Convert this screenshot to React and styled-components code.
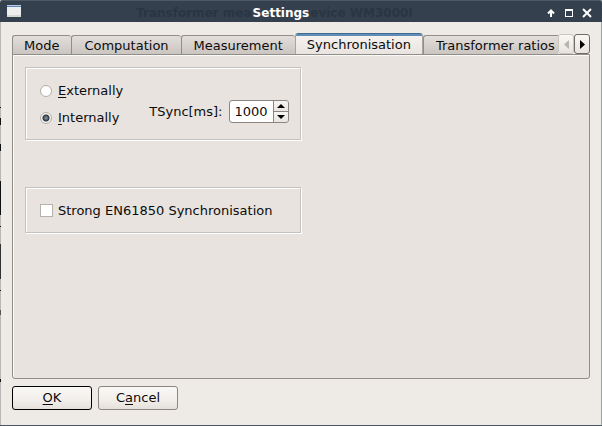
import React, { useState } from "react";
import styled, { createGlobalStyle } from "styled-components";

const GlobalStyle = createGlobalStyle`
  * { box-sizing: border-box; }
  body { margin: 0; background: #8f9a9c; }
  body, button, input { font: 13px/17px "DejaVu Sans", sans-serif; color: #0c0c0c; }
`;

const Window = styled.div`
  min-height: 100vh;
  display: flex;
  flex-direction: column;
  padding: 0 1px;
  border-bottom: 1px solid #4a5662;
  background: linear-gradient(
    #b9b7b5 0 107px, #111 107px 108px, #b9b7b5 108px 118px, #111 118px 125px,
    #b9b7b5 125px 144px, #111 144px 151px, #b9b7b5 151px 181px, #111 181px 215px,
    #b9b7b5 215px 226px, #111 226px 227px, #b9b7b5 227px 244px, #333 244px 279px,
    #b9b7b5 279px 290px, #111 290px 291px, #b9b7b5 291px 310px, #555 310px 315px,
    #b9b7b5 315px 379px, #111 379px 382px, #b9b7b5 382px
  ) left / 1px 100% no-repeat, #9aa6a6;
`;

const TitleBar = styled.header`
  height: 22px;
  margin: 0 -1px;
  display: flex;
  align-items: center;
  padding: 2px 8px 0 7px;
  border-top: 1px solid #4d5864;
  border-radius: 3px 3px 0 0;
  background: #34404e;
`;

const Title = styled.h1`
  flex: 1;
  display: flex;
  justify-content: center;
  margin: 0;
  padding: 2px 16px 0 0;
  font-size: 12px;
  line-height: 17px;
  color: #fff;
`;

const TitleText = styled.span`
  padding: 0 1px;
`;

const ShadeText = styled.span`
  color: #2a3542;
  white-space: pre;
`;

const AppIcon = styled.svg`
  width: 14px;
  height: 12px;
  margin-bottom: 4px;
`;

const WindowControls = styled.div`
  display: flex;
  gap: 4px;
`;

const WindowButton = styled.button`
  width: 14px;
  height: 16px;
  padding: 0;
  display: grid;
  place-items: center;
  border: 0;
  background: none;
`;

const Body = styled.main`
  flex: 1;
  display: flex;
  flex-direction: column;
  padding: 11px 11px 15px;
  background: #eeebe7;
`;

const TabRow = styled.div`
  display: flex;
  align-items: flex-end;
  height: 22px;
`;

const TabStrip = styled.div`
  flex: 1;
  min-width: 0;
  display: flex;
  align-items: flex-end;
  overflow: hidden;
`;

const Tab = styled.button`
  flex: none;
  height: ${(p) => (p.$active ? 22 : 20)}px;
  padding: ${(p) => (p.$active ? "0 11px" : "1px 12px 0")};
  border: solid ${(p) => (p.$active ? "#a8a49f" : "#918e89")};
  border-width: ${(p) => (p.$active ? "0 1px" : "1px 0 1px 1px")};
  border-radius: 3px 3px 0 0;
  background: ${(p) => (p.$active
    ? "linear-gradient(#416b91 0 1px, #5f8db8 1px 3px, #f5f2ef 3px, #e8e3df)"
    : "linear-gradient(#e3dedb, #cbc5c0)")};
  white-space: nowrap;
  &:first-child { padding-left: 11px; }
`;

const ScrollButton = styled.button`
  flex: none;
  width: 16px;
  height: 20px;
  margin-bottom: 1px;
  padding: 0;
  display: grid;
  place-items: center;
  border: 1px solid ${(p) => (p.disabled ? "#cac5c0" : "#6f6b68")};
  border-radius: 3px;
  background: linear-gradient(#f9f7f5, #e8e3df);
  color: ${(p) => (p.disabled ? "#b7b3af" : "#000")};
`;

const Pane = styled.section`
  flex: 1;
  display: flex;
  flex-direction: column;
  align-items: flex-start;
  gap: 47px;
  margin-top: -1px;
  padding: 12px;
  border: 1px solid #918e89;
  border-radius: 0 0 3px 3px;
  box-shadow: inset 1px 1px 0 #fbfaf9;
  background: #e8e3df;
`;

const Group = styled.div`
  width: 276px;
  display: flex;
  align-items: center;
  gap: 26px;
  padding: 14px 11px 13px 14px;
  border: 1px solid #c5c2bf;
  box-shadow: inset 1px 1px 0 #fff, 1px 1px 0 #fff;
`;

const Options = styled.div`
  display: grid;
  gap: 10px;
`;

const Choice = styled.label`
  display: flex;
  align-items: center;
  gap: 5px;
  white-space: nowrap;
`;

const Radio = styled.input`
  appearance: none;
  width: 12px;
  height: 12px;
  margin: 0 1px 0 0;
  border: 1px solid #b5aea6;
  border-radius: 50%;
  background: #fff;
  &:checked {
    background: radial-gradient(circle at 5px 5px, #75818b 0 1px, #27333e 3px, transparent 4px), #f5f3f0;
  }
`;

const CheckBox = styled.input`
  appearance: none;
  width: 13px;
  height: 13px;
  margin: 0;
  border: 1px solid #b5b1ad;
  background: #fff;
  &:checked { box-shadow: inset 0 0 0 3px #fff; background: #27333e; }
`;

const Mnemonic = styled.span`
  text-decoration: underline 1px;
  text-underline-offset: 2px;
  text-decoration-skip-ink: none;
`;

const SpinField = styled.div`
  display: flex;
  align-items: center;
  gap: 7px;
  margin-top: 15px;
`;

const SpinBox = styled.div`
  display: flex;
  width: 60px;
  height: 23px;
  border: 1px solid #8b8682;
  border-radius: 3px;
  overflow: hidden;
  background: #fff;
`;

const SpinInput = styled.input`
  flex: 1;
  min-width: 0;
  padding: 0 0 0 4px;
  border: 0;
  outline: 0;
  background: none;
`;

const SpinButtons = styled.div`
  width: 15px;
  display: grid;
  grid-template-rows: 1fr 1fr;
  gap: 1px;
  border-left: 1px solid #8b8682;
  background: #8b8682;
`;

const SpinButton = styled.button`
  min-height: 0;
  padding: 0;
  display: grid;
  place-items: center;
  border: 0;
  background: linear-gradient(#f7f5f3, #e9e5e1);
`;

const Actions = styled.footer`
  display: flex;
  gap: 6px;
  margin-top: 7px;
`;

const ActionButton = styled.button`
  width: 80px;
  height: 24px;
  padding: 0 0 1px;
  border: 1px solid ${(p) => (p.$primary ? "#000" : "#8b8682")};
  border-radius: 3px;
  background: linear-gradient(#faf8f6, #f1eeeb 60%, #e5e0dc);
`;

const tabs = ["Mode", "Computation", "Measurement", "Synchronisation", "Transformer ratios"];

export default function App() {
  const [active, setActive] = useState(3);
  const [source, setSource] = useState("internal");
  const [interval, setIntervalMs] = useState(1000);

  return (
    <>
      <GlobalStyle />
      <Window>
        <TitleBar>
          <AppIcon viewBox="0 0 14 12" shapeRendering="crispEdges" aria-hidden="true">
            <rect width="14" height="12" fill="#eeeeec" />
            <rect width="14" height="1" fill="#b7cbe5" />
            <rect y="1" width="14" height="1" fill="#6383bd" />
            <rect y="10" width="14" height="2" fill="#d7d9d5" />
          </AppIcon>
          <Title>
            <ShadeText aria-hidden="true">Transformer mea</ShadeText>
            <TitleText>Settings</TitleText>
            <ShadeText aria-hidden="true">evice WM3000I</ShadeText>
          </Title>
          <WindowControls>
            <WindowButton aria-label="Shade">
              <svg width="8" height="8" viewBox="0 0 8 8"><path d="M4 8V2M1 4.5 4 1.5 7 4.5" fill="none" stroke="#fff" strokeWidth="2" /></svg>
            </WindowButton>
            <WindowButton aria-label="Maximize">
              <svg width="8" height="8" viewBox="0 0 8 8" shapeRendering="crispEdges"><path d="M0 0h8v8H0zM1 2v5h6V2z" fill="#fff" fillRule="evenodd" /></svg>
            </WindowButton>
            <WindowButton aria-label="Close">
              <svg width="10" height="10" viewBox="0 0 10 10"><path d="m1 1 8 8M9 1 1 9" stroke="#fff" strokeWidth="2" /></svg>
            </WindowButton>
          </WindowControls>
        </TitleBar>
        <Body>
          <TabRow>
            <TabStrip role="tablist">
              {tabs.map((name, i) => (
                <Tab key={name} role="tab" aria-selected={i === active} $active={i === active} onClick={() => setActive(i)}>
                  {name}
                </Tab>
              ))}
            </TabStrip>
            <ScrollButton disabled aria-label="Scroll tabs left">
              <svg width="5" height="9" viewBox="0 0 5 9"><path d="M5 0v9L0 4.5z" fill="currentColor" /></svg>
            </ScrollButton>
            <ScrollButton aria-label="Scroll tabs right">
              <svg width="5" height="9" viewBox="0 0 5 9"><path d="M0 0v9l5-4.5z" fill="currentColor" /></svg>
            </ScrollButton>
          </TabRow>
          <Pane role="tabpanel">
            <Group>
              <Options>
                <Choice>
                  <Radio type="radio" name="source" checked={source === "external"} onChange={() => setSource("external")} />
                  <span><Mnemonic>E</Mnemonic>xternally</span>
                </Choice>
                <Choice>
                  <Radio type="radio" name="source" checked={source === "internal"} onChange={() => setSource("internal")} />
                  <span><Mnemonic>I</Mnemonic>nternally</span>
                </Choice>
              </Options>
              <SpinField>
                <label htmlFor="tsync">TSync[ms]:</label>
                <SpinBox>
                  <SpinInput id="tsync" inputMode="numeric" value={interval} onChange={(e) => setIntervalMs(Number(e.target.value) || 0)} />
                  <SpinButtons>
                    <SpinButton aria-label="Increase" onClick={() => setIntervalMs(interval + 1)}>
                      <svg width="8" height="4" viewBox="0 0 8 4"><path d="M0 4h8L4 0z" /></svg>
                    </SpinButton>
                    <SpinButton aria-label="Decrease" onClick={() => setIntervalMs(Math.max(0, interval - 1))}>
                      <svg width="8" height="4" viewBox="0 0 8 4"><path d="M0 0h8L4 4z" /></svg>
                    </SpinButton>
                  </SpinButtons>
                </SpinBox>
              </SpinField>
            </Group>
            <Group>
              <Choice>
                <CheckBox type="checkbox" />
                Strong EN61850 Synchronisation
              </Choice>
            </Group>
          </Pane>
          <Actions>
            <ActionButton $primary><Mnemonic>O</Mnemonic>K</ActionButton>
            <ActionButton>C<Mnemonic>a</Mnemonic>ncel</ActionButton>
          </Actions>
        </Body>
      </Window>
    </>
  );
}
